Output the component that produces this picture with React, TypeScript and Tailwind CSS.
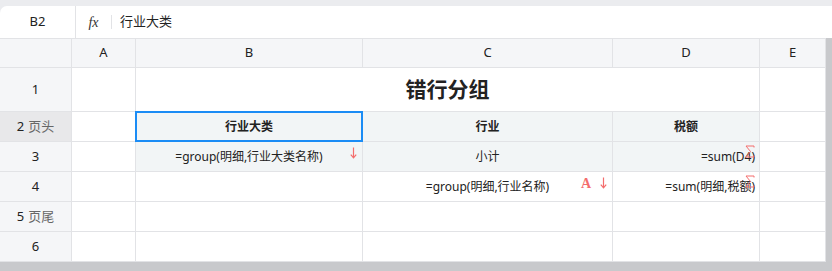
import React from "react";

const LINE = "border-[#e2e3e6]";

function Arrow() {
  return (
    <svg width="7" height="12" viewBox="0 0 7 12" className="block">
      <path d="M3.5 0.5 V10.5 M0.8 7.6 L3.5 10.8 L6.2 7.6" fill="none" stroke="#f46d6d" strokeWidth="1.2" />
    </svg>
  );
}

function Sigma() {
  return (
    <svg width="10" height="13" viewBox="0 0 10 13" className="block">
      <path d="M9 2.5 V1 H1 L5.5 6.5 L1 12 H9 V10.5" fill="none" stroke="#f46d6d" strokeWidth="1" />
    </svg>
  );
}

export default function App() {
  const font = { fontFamily: '"Noto Sans", "Noto Sans CJK SC", sans-serif' };
  const rowH = ["h-[44px]", "h-[30px]", "h-[30px]", "h-[30px]", "h-[30px]", "h-[30px]"];
  const cellBase = `border-r border-b ${LINE} relative flex items-center text-[12px] text-[#222]`;
  const hdr = `bg-[#f5f6f8] border-r border-b ${LINE} flex items-center justify-center text-[13px] text-[#222]`;
  return (
    <div className="w-[832px] h-[271px] bg-[#ebecef] pt-[6px] overflow-hidden" style={font}>
      <div className="bg-white rounded-tl-[7px] h-[32px] flex items-center">
        <div className={`w-[76px] h-full border-r ${LINE} flex items-center justify-center text-[13px] text-[#222]`}>B2</div>
        <div className="w-[35px] h-full flex items-center justify-center">
          <span className="text-[14px] italic text-[#333]" style={{ fontFamily: '"Liberation Serif", serif' }}>fx</span>
        </div>
        <div className="w-px h-[14px] bg-[#e2e3e6]" />
        <div className="pl-[8px] text-[13px] text-[#222]">行业大类</div>
      </div>
      <div className="flex bg-[#c8c9cc]">
        <div className="w-[826px] bg-white">
          <div className={`grid grid-cols-[72px_64px_227px_250px_147px_66px] border-t ${LINE}`}>
            {/* header row */}
            <div className={`h-[29px] ${hdr}`} />
            <div className={`h-[29px] ${hdr}`}>A</div>
            <div className={`h-[29px] ${hdr} bg-[#e8e8ea]`}>B</div>
            <div className={`h-[29px] ${hdr}`}>C</div>
            <div className={`h-[29px] ${hdr}`}>D</div>
            <div className={`h-[29px] ${hdr}`}>E</div>

            {/* row 1 */}
            <div className={`${rowH[0]} ${hdr}`}>1</div>
            <div className={`${rowH[0]} ${cellBase}`} />
            <div className={`${rowH[0]} col-span-3 ${cellBase} justify-center`}>
              <span className="text-[21px] font-bold text-[#222]">错行分组</span>
            </div>
            <div className={`${rowH[0]} ${cellBase}`} />

            {/* row 2 */}
            <div className={`${rowH[1]} ${hdr} !bg-[#e8e8ea]`}>
              2 <span className="ml-[4px] text-[#666]">页头</span>
            </div>
            <div className={`${rowH[1]} ${cellBase}`} />
            <div className={`${rowH[1]} ${cellBase} bg-[#f2f5f6] justify-center font-bold`}>
              行业大类
              <div className="absolute -left-px -top-px -right-px -bottom-px border-2 border-[#1b8cf5]" />
            </div>
            <div className={`${rowH[1]} ${cellBase} bg-[#f2f5f6] justify-center font-bold`}>行业</div>
            <div className={`${rowH[1]} ${cellBase} bg-[#f2f5f6] justify-center font-bold`}>税额</div>
            <div className={`${rowH[1]} ${cellBase}`} />

            {/* row 3 */}
            <div className={`${rowH[2]} ${hdr}`}>3</div>
            <div className={`${rowH[2]} ${cellBase}`} />
            <div className={`${rowH[2]} ${cellBase} bg-[#f2f5f6] justify-center`}>
              =group(明细,行业大类名称)
              <div className="absolute right-[5px] top-[5px]"><Arrow /></div>
            </div>
            <div className={`${rowH[2]} ${cellBase} bg-[#f2f5f6] justify-center`}>小计</div>
            <div className={`${rowH[2]} ${cellBase} bg-[#f2f5f6] justify-end pr-[4px]`}>
              =sum(D4)
              <div className="absolute right-[4px] top-[3px]"><Sigma /></div>
            </div>
            <div className={`${rowH[2]} ${cellBase}`} />

            {/* row 4 */}
            <div className={`${rowH[3]} ${hdr}`}>4</div>
            <div className={`${rowH[3]} ${cellBase}`} />
            <div className={`${rowH[3]} ${cellBase}`} />
            <div className={`${rowH[3]} ${cellBase} justify-center`}>
              =group(明细,行业名称)
              <div className="absolute right-[5px] top-[5px] flex items-start gap-[9px]">
                <span className="text-[14px] font-bold leading-[13px] text-[#f46d6d]" style={{ fontFamily: '"Liberation Serif", serif' }}>A</span>
                <Arrow />
              </div>
            </div>
            <div className={`${rowH[3]} ${cellBase} justify-end pr-[4px]`}>
              =sum(明细,税额)
              <div className="absolute right-[4px] top-[3px]"><Sigma /></div>
            </div>
            <div className={`${rowH[3]} ${cellBase}`} />

            {/* row 5 */}
            <div className={`${rowH[4]} ${hdr}`}>
              5 <span className="ml-[4px] text-[#666]">页尾</span>
            </div>
            <div className={`${rowH[4]} ${cellBase}`} />
            <div className={`${rowH[4]} ${cellBase}`} />
            <div className={`${rowH[4]} ${cellBase}`} />
            <div className={`${rowH[4]} ${cellBase}`} />
            <div className={`${rowH[4]} ${cellBase}`} />

            {/* row 6 */}
            <div className={`${rowH[5]} ${hdr}`}>6</div>
            <div className={`${rowH[5]} ${cellBase}`} />
            <div className={`${rowH[5]} ${cellBase}`} />
            <div className={`${rowH[5]} ${cellBase}`} />
            <div className={`${rowH[5]} ${cellBase}`} />
            <div className={`${rowH[5]} ${cellBase}`} />
          </div>
        </div>
      </div>
      <div className="h-[10px] bg-[#c8c9cc]" />
    </div>
  );
}
